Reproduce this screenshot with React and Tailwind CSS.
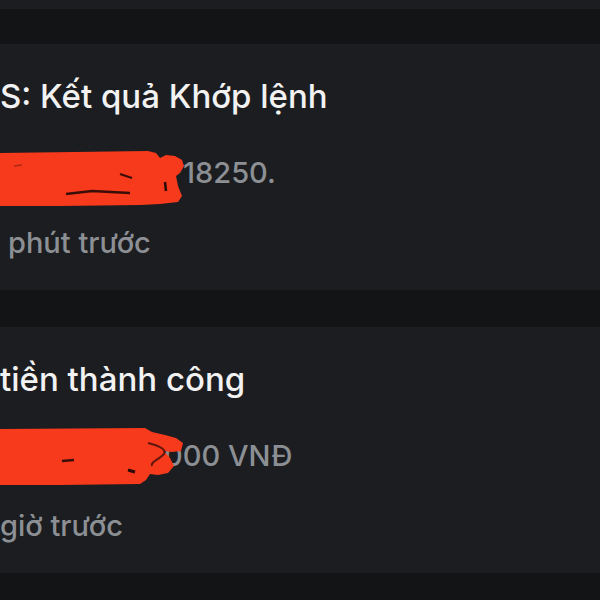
import React from "react";

const font = { fontFamily: "Inter, 'Noto Sans', sans-serif" };

function Scribbles() {
  return (
    <svg
      className="pointer-events-none absolute left-0 top-0"
      width="600"
      height="600"
      viewBox="0 0 600 600"
    >
      {/* scribble 1 */}
      <path
        d="M0,153 L148,151 L156,153 L160,158 L166,155 L175,156 L182,160 L184,166 L180,173 L176,176 L178,186 L182,196 L178,202 L160,204 L140,205 L60,206 L0,206 Z"
        fill="#f73a1c"
      />
      <path d="M14,166 L22,165" stroke="#7a1a0e" strokeWidth="1.5" fill="none" opacity="0.6" />
      <path d="M120,174 L132,178" stroke="#3a0e08" strokeWidth="2" fill="none" />
      <path d="M66,194 L92,191 L130,193" stroke="#3a0e08" strokeWidth="2.5" fill="none" />
      <path d="M165,182 L166,191" stroke="#2a0a06" strokeWidth="2.5" fill="none" />
      {/* scribble 2 */}
      <path
        d="M0,429 L145,428 L152,432 L165,435 L176,438 L183,443 L181,451 L172,452 L164,451 L170,458 L174,466 L168,473 L158,475 L150,474 L146,480 L140,484 L60,485 L0,485 Z"
        fill="#f73a1c"
      />
      <path d="M148,443 C160,446 168,450 163,455 C158,460 150,462 152,466" stroke="#3a0e08" strokeWidth="2" fill="none" opacity="0.8" />
      <path d="M62,461 L74,460" stroke="#3a0e08" strokeWidth="2.5" fill="none" />
      <path d="M128,470 L135,472" stroke="#2a0a06" strokeWidth="3" fill="none" />
    </svg>
  );
}

function Card({ title, titleClass, body, bodyClass, time, timeClass }) {
  return (
    <div className="flex flex-col bg-[#1c1d20] pt-[32px] pb-[27px] overflow-hidden">
      <div className={`h-[40px] leading-[40px] text-[33px] font-medium text-[#f2f2f2] whitespace-nowrap ${titleClass}`}>{title}</div>
      <div className={`mt-[37px] h-[40px] leading-[40px] text-[29px] font-medium text-[#8c9095] whitespace-nowrap ${bodyClass}`}>{body}</div>
      <div className={`mt-[30px] h-[40px] leading-[40px] text-[29px] font-medium text-[#8c9095] whitespace-nowrap ${timeClass}`}>{time}</div>
    </div>
  );
}

export default function App() {
  return (
    <div className="relative h-[600px] w-[600px] overflow-hidden bg-[#131416]" style={font}>
      <div className="flex flex-col">
        <div className="h-[9px] bg-[#1c1d20]" />
        <div className="h-[35px]" />
        <Card
          title="S: Kết quả Khớp lệnh"
          titleClass="ml-0"
          body="18250."
          bodyClass="pl-[183px]"
          time="phút trước"
          timeClass="pl-[8px]"
        />
        <div className="h-[37px]" />
        <Card
          title="tiền thành công"
          titleClass="ml-0"
          body="000 VNĐ"
          bodyClass="pl-[164px]"
          time="giờ trước"
          timeClass="ml-0"
        />
      </div>
      <Scribbles />
    </div>
  );
}
